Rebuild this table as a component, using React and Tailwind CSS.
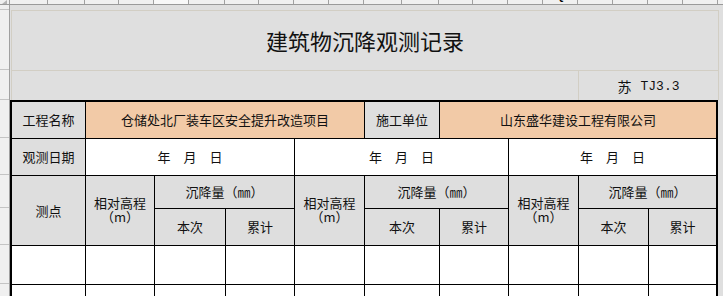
import React from "react";

const cjk = "font-['SimSun','Noto_Sans_CJK_SC','Noto_Sans',sans-serif]";

// excel column header strip (x from 10)
const headCols = [
  { w: "w-[38px]", l: "B" },
  { w: "w-[37px]", l: "C" },
  { w: "w-[34px]", l: "D" },
  { w: "w-[35px]", l: "E" },
  { w: "w-[35px]", l: "F", on: true },
  { w: "w-[36px]", l: "G" },
  { w: "w-[34px]", l: "H" },
  { w: "w-[35px]", l: "I" },
  { w: "w-[35px]", l: "J" },
  { w: "w-[35px]", l: "K" },
  { w: "w-[38px]", l: "L" },
  { w: "w-[37px]", l: "M" },
  { w: "w-[34px]", l: "N" },
  { w: "w-[35px]", l: "O" },
  { w: "w-[35px]", l: "P" },
  { w: "w-[35px]", l: "Q" },
  { w: "w-[35px]", l: "R" },
  { w: "w-[35px]", l: "S" },
  { w: "w-[35px]", l: "T" },
  { w: "w-[35px]", l: "U" },
  { w: "w-[10px]", l: "V" },
];

const rowHeads = [
  "h-[5px]",
  "h-[60px]",
  "h-[30px]",
  "h-[38px]",
  "h-[37px]",
  "h-[33px]",
  "h-[37px]",
  "h-[39px]",
  "h-[39px]",
];

const Cell = ({ className = "", last, children }) => (
  <div
    className={`flex items-center justify-center border-b border-black text-[13px] leading-[14px] text-[#111] ${
      last ? "" : "border-r"
    } ${className}`}
  >
    {children}
  </div>
);

const Date = () => (
  <div className="flex gap-[13px]">
    <span>年</span>
    <span>月</span>
    <span>日</span>
  </div>
);

const Elev = () => (
  <div className="flex flex-col items-center -mt-[1px]">
    <span className="leading-[14px]">相对高程</span>
    <span className="leading-[14px]">（m）</span>
  </div>
);

const App = () => {
  return (
    <div
      className={`w-[723px] h-[296px] overflow-hidden bg-[#dfdfdf] flex flex-col ${cjk}`}
    >
      {/* column headers */}
      <div className="flex h-[5px] shrink-0 bg-[#f0f0f0] border-b border-[#9a9a9a]">
        <div className="w-[10px] shrink-0 border-r border-[#a0a0a0] relative">
          <svg width="10" height="5" className="absolute left-0 top-0">
            <path d="M2 4 L7 0 L7 4 Z" fill="#b4b4b4" />
          </svg>
        </div>
        {headCols.map((c) => (
          <div
            key={c.l}
            className={`${c.w} shrink-0 border-r border-[#a0a0a0] overflow-hidden flex justify-center ${
              c.on ? "bg-[#f8f8f8]" : ""
            }`}
          >
            <span className="font-['Liberation_Sans',sans-serif] font-bold text-[11px] leading-[11px] -mt-[9px] text-black">
              {c.l}
            </span>
          </div>
        ))}
      </div>

      <div className="flex flex-1">
        {/* row headers */}
        <div className="w-[10px] shrink-0 bg-[#f0f0f0] border-r border-[#a0a0a0] flex flex-col">
          {rowHeads.map((h, i) => (
            <div key={i} className={`${h} shrink-0 border-b border-[#c4c4c4]`} />
          ))}
        </div>

        {/* sheet */}
        <div className="flex flex-col">
          <div className="h-[5px] shrink-0" />
          <div className="ml-[1px] w-[708px] h-[61px] shrink-0 border border-[#d2cec4] flex items-center justify-center text-[22px] text-[#111]">
            建筑物沉降观测记录
          </div>
          <div className="ml-[1px] flex h-[29px] shrink-0">
            <div className="w-[567px] border-l border-[#d2cec4]" />
            <div className="w-[141px] border-x border-[#d2cec4] flex items-center justify-center pt-[2px] text-[14px] text-[#111]">
              <span>苏</span>
              <span className="ml-[9px] font-['Liberation_Mono',monospace] text-[13px]">
                TJ3.3
              </span>
            </div>
          </div>

          {/* table */}
          <div className="w-[708px] border-t-2 border-x-2 border-black grid grid-cols-[74px_69px_71px_69px_70px_75px_69px_70px_70px_67px] grid-rows-[37px_37px_33px_37px_39px_39px]">
            <Cell className="bg-[#dedede]">工程名称</Cell>
            <Cell className="col-span-4 bg-[#f2caa7]">仓储处北厂装车区安全提升改造项目</Cell>
            <Cell className="bg-[#dedede]">施工单位</Cell>
            <Cell className="col-span-4 bg-[#f2caa7]" last>
              山东盛华建设工程有限公司
            </Cell>

            <Cell className="bg-[#dedede]">观测日期</Cell>
            <Cell className="col-span-3 bg-white">
              <Date />
            </Cell>
            <Cell className="col-span-3 bg-white">
              <Date />
            </Cell>
            <Cell className="col-span-3 bg-white" last>
              <Date />
            </Cell>

            <Cell className="row-span-2 bg-[#dedede]">测点</Cell>
            <Cell className="row-span-2 bg-[#dedede]">
              <Elev />
            </Cell>
            <Cell className="col-span-2 bg-[#dedede]">沉降量（㎜）</Cell>
            <Cell className="row-span-2 bg-[#dedede]">
              <Elev />
            </Cell>
            <Cell className="col-span-2 bg-[#dedede]">沉降量（㎜）</Cell>
            <Cell className="row-span-2 bg-[#dedede]">
              <Elev />
            </Cell>
            <Cell className="col-span-2 bg-[#dedede]" last>
              沉降量（㎜）
            </Cell>

            <Cell className="bg-[#dedede]">本次</Cell>
            <Cell className="bg-[#dedede]">累计</Cell>
            <Cell className="bg-[#dedede]">本次</Cell>
            <Cell className="bg-[#dedede]">累计</Cell>
            <Cell className="bg-[#dedede]">本次</Cell>
            <Cell className="bg-[#dedede]" last>
              累计
            </Cell>

            {[0, 1].map((r) =>
              [0, 1, 2, 3, 4, 5, 6, 7, 8, 9].map((c) => (
                <Cell key={`${r}-${c}`} className="bg-white" last={c === 9} />
              ))
            )}
          </div>
        </div>
      </div>
    </div>
  );
};

export default App;
